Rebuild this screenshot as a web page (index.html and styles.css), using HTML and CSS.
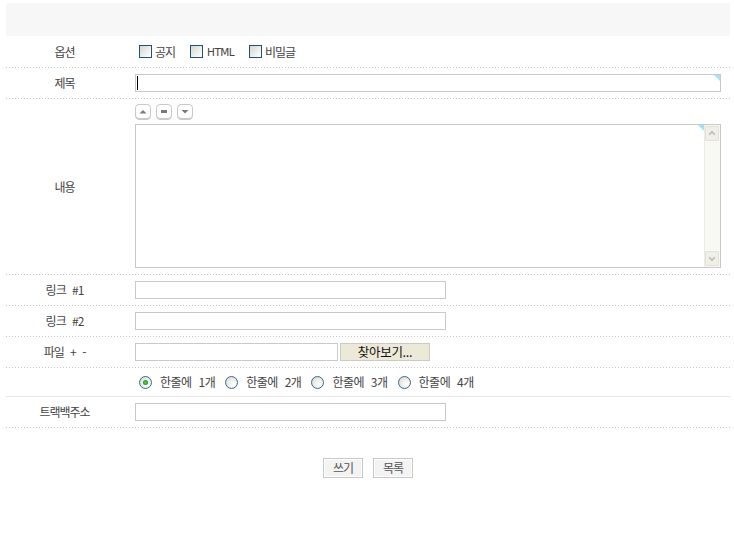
FILE: index.html
```html
<!DOCTYPE html>
<html lang="ko">
<head>
<meta charset="utf-8">
<title>글쓰기</title>
<link rel="stylesheet" href="styles.css">
</head>
<body>
<div class="page">
  <div class="topbar"></div>

  <div class="row r-opt">
    <div class="label">옵션</div>
    <div class="field f-opt">
      <label class="chk"><span class="cb"></span><span class="ct">공지</span></label>
      <label class="chk"><span class="cb"></span><span class="ct en">HTML</span></label>
      <label class="chk"><span class="cb"></span><span class="ct">비밀글</span></label>
    </div>
  </div>

  <div class="row">
    <div class="label">제목</div>
    <div class="field">
      <div class="inp w-full"><span class="caret"></span><span class="corner"></span></div>
    </div>
  </div>

  <div class="row">
    <div class="label">내용</div>
    <div class="field f-content">
      <div class="tools">
        <svg class="tbtn" width="16" height="16" viewBox="0 0 16 16"><rect x="0" y="0" width="16" height="16" rx="4.5" fill="#c9c9c9"/><rect x="1" y="1" width="14" height="13" rx="3.5" fill="#fff"/><polygon points="4.5,9.5 11.5,9.5 8,6" fill="#7a7a7a"/></svg>
        <svg class="tbtn" width="16" height="16" viewBox="0 0 16 16"><rect x="0" y="0" width="16" height="16" rx="4.5" fill="#c9c9c9"/><rect x="1" y="1" width="14" height="13" rx="3.5" fill="#fff"/><rect x="5" y="6" width="6" height="3" fill="#7a7a7a"/></svg>
        <svg class="tbtn" width="16" height="16" viewBox="0 0 16 16"><rect x="0" y="0" width="16" height="16" rx="4.5" fill="#c9c9c9"/><rect x="1" y="1" width="14" height="13" rx="3.5" fill="#fff"/><polygon points="4.5,6 11.5,6 8,9.5" fill="#7a7a7a"/></svg>
      </div>
      <div class="ta">
        <div class="ta-body"><span class="corner"></span></div>
        <div class="sb">
          <div class="sb-btn"><svg width="14" height="15" viewBox="0 0 14 15"><polyline points="3.5,9 7,5.5 10.5,9" fill="none" stroke="#c2c2ba" stroke-width="2"/></svg></div>
          <div class="sb-track"></div>
          <div class="sb-btn"><svg width="14" height="15" viewBox="0 0 14 15"><polyline points="3.5,6 7,9.5 10.5,6" fill="none" stroke="#c2c2ba" stroke-width="2"/></svg></div>
        </div>
      </div>
    </div>
  </div>

  <div class="row">
    <div class="label">링크 #1</div>
    <div class="field"><div class="inp w-mid"></div></div>
  </div>

  <div class="row">
    <div class="label">링크 #2</div>
    <div class="field"><div class="inp w-mid"></div></div>
  </div>

  <div class="row">
    <div class="label">파일 + -</div>
    <div class="field">
      <div class="inp w-file"></div>
      <button class="browse" type="button">찾아보기...</button>
    </div>
  </div>

  <div class="row solid r-radio">
    <div class="label"></div>
    <div class="field f-radio">
      <label class="opt"><span class="rd on"></span><span class="rt">한줄에 1개</span></label>
      <label class="opt"><span class="rd"></span><span class="rt">한줄에 2개</span></label>
      <label class="opt"><span class="rd"></span><span class="rt">한줄에 3개</span></label>
      <label class="opt"><span class="rd"></span><span class="rt">한줄에 4개</span></label>
    </div>
  </div>

  <div class="row">
    <div class="label">트랙백주소</div>
    <div class="field"><div class="inp w-mid"></div></div>
  </div>

  <div class="actions">
    <button class="btn" type="button">쓰기</button>
    <button class="btn" type="button">목록</button>
  </div>
</div>
</body>
</html>
```

FILE: styles.css
```css
* { box-sizing: border-box; }

body {
  margin: 0;
  background: #fff;
  font-family: "Noto Sans CJK KR", "Noto Sans", sans-serif;
  font-size: 12px;
  color: #444;
}

.page {
  margin: 3px 4px 0 6px;
}

.topbar {
  height: 33px;
  background: #f7f7f7;
}

.row {
  display: flex;
  align-items: center;
  padding-bottom: 1px;
  background: repeating-linear-gradient(to right, #c6c6c6 0 1px, transparent 1px 3px) left bottom / 100% 1px no-repeat;
}

.row.solid {
  background: linear-gradient(#e6e6e6, #e6e6e6) left bottom / 100% 1px no-repeat;
}

.label {
  width: 117px;
  flex: none;
  text-align: center;
  letter-spacing: -1px;
  word-spacing: 4px;
  line-height: 14px;
}

.field {
  flex: 1;
  display: flex;
  align-items: center;
  padding: 6px 0 6px 12px;
}

/* options row */
.f-opt {
  height: 31px;
  padding: 0 0 0 12px;
}

.chk {
  display: flex;
  align-items: center;
  margin-right: 15px;
}

.cb {
  width: 13px;
  height: 13px;
  margin-left: 4px;
  margin-right: 3px;
  border: 1px solid #1c5180;
  background: linear-gradient(135deg, #d6d6ce 0%, #f4f4f0 70%, #fff 100%);
}

.chk + .chk .cb { margin-left: 0; }

.ct {
  letter-spacing: -1px;
  line-height: 14px;
}

.ct.en {
  font-family: "DejaVu Sans", sans-serif;
  font-size: 10.5px;
  letter-spacing: -0.6px;
  margin-left: 1px;
}

/* inputs */
.inp {
  position: relative;
  height: 18px;
  border: 1px solid #c9c9c9;
  background: #fff;
}

.w-full { width: 586px; }
.w-mid { width: 311px; }
.w-file { width: 203px; }

.caret {
  position: absolute;
  left: 1px;
  top: 1px;
  width: 1px;
  height: 14px;
  background: #000;
}

.corner {
  position: absolute;
  top: 0;
  right: 0;
  width: 0;
  height: 0;
  border-top: 6px solid #a4e1f6;
  border-left: 6px solid transparent;
}

/* content row */
.f-content {
  flex-direction: column;
  align-items: flex-start;
  padding: 5px 0 6px 12px;
}

.tools {
  display: flex;
  gap: 5px;
  height: 16px;
  margin-bottom: 4px;
}

.tbtn { display: block; }

.ta {
  display: flex;
  width: 586px;
  height: 144px;
  border: 1px solid #c9c9c9;
  background: #fff;
}

.ta-body {
  position: relative;
  flex: 1;
}

.sb {
  width: 16px;
  display: flex;
  flex-direction: column;
  background: #f9f9f3;
  border-left: 1px solid #ecece4;
  padding: 1px 1px 1px 0;
}

.sb-btn {
  height: 15px;
  background: #f1f0e8;
  border: 1px solid #e3e2da;
  border-radius: 1px;
  display: flex;
  align-items: center;
  justify-content: center;
}

.sb-btn svg { display: block; }

.sb-track { flex: 1; }

/* file */
.browse {
  width: 90px;
  height: 18px;
  margin: 0 0 0 2px;
  padding: 0;
  border: 1px solid #cbcbc3;
  background: #ece9d8;
  color: #111;
  font-family: "Noto Sans CJK KR", sans-serif;
  font-size: 12.5px;
  font-weight: 400;
  letter-spacing: -0.3px;
  line-height: 14px;
}

/* radio row */
.r-radio .field {
  height: 28px;
  padding: 0 0 0 12px;
}

.opt {
  display: flex;
  align-items: center;
  margin-right: 10px;
}

.rd {
  position: relative;
  width: 13px;
  height: 13px;
  margin-left: 4px;
  margin-right: 8px;
  border-radius: 50%;
  border: 1px solid #3b6796;
  background: radial-gradient(circle at 65% 65%, #ffffff 0%, #eeeee8 45%, #d2d2ca 100%);
}

.opt + .opt .rd { margin-left: 0; }

.rd.on::after {
  content: "";
  position: absolute;
  left: 3px;
  top: 3px;
  width: 5px;
  height: 5px;
  border-radius: 50%;
  background: radial-gradient(circle, #5fd35f 0%, #21a121 60%, #1a8a1a 100%);
}

.rt {
  letter-spacing: -0.5px;
  word-spacing: 4px;
  line-height: 14px;
}

/* bottom buttons */
.actions {
  display: flex;
  justify-content: center;
  gap: 10px;
  margin-top: 30px;
}

.btn {
  width: 40px;
  height: 20px;
  padding: 0;
  border: 1px solid #c8c8c8;
  box-shadow: inset 0 0 0 1px #fff;
  background: #f3f3f3;
  color: #555;
  font-family: "Noto Sans CJK KR", sans-serif;
  font-size: 12px;
  letter-spacing: -1px;
  line-height: 14px;
}
```
